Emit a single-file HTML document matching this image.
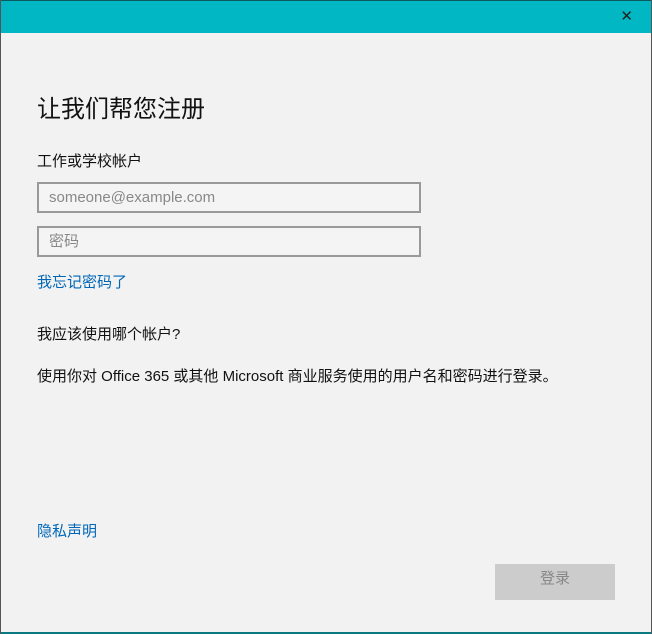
<html><head><style>
body{margin:0;width:652px;height:634px;background:#f2f2f2;font-family:"Liberation Sans","Noto Sans CJK SC",sans-serif;position:relative;overflow:hidden}
.t{position:absolute;left:0;top:0;width:652px;height:32px;background:#00b7c3;border-top:1px solid #0a5a60}
.x{position:absolute;right:19px;top:6px;font-size:15px;color:#222}
.a{position:absolute;white-space:nowrap}
.in{position:absolute;left:37px;height:27px;border:2px solid #999;background:#f4f4f4;color:#888;font-size:15px;line-height:27px;padding-left:10px;width:370px}
.l{color:#0067b8;font-size:15px}
</style></head><body style="background:#f2f2f2">
<div class="t"><span class="x">✕</span></div>
<div class="a" style="left:37px;top:89px;font-size:24px;color:#111">让我们帮您注册</div>
<div class="a" style="left:37px;top:150px;font-size:15px;color:#111">工作或学校帐户</div>
<div class="in" style="top:182px">someone@example.com</div>
<div class="in" style="top:226px">密码</div>
<div class="a l" style="left:37px;top:271px">我忘记密码了</div>
<div class="a" style="left:37px;top:323px;font-size:15px;color:#111">我应该使用哪个帐户?</div>
<div class="a" style="left:37px;top:365px;font-size:15px;color:#111">使用你对 Office 365 或其他 Microsoft 商业服务使用的用户名和密码进行登录。</div>
<div class="a l" style="left:37px;top:520px">隐私声明</div>
<div class="a" style="left:495px;top:564px;width:120px;height:36px;background:#ccc;color:#888;font-size:15px;text-align:center;line-height:30px">登录</div>
<div class="a" style="left:0;top:632px;width:652px;height:2px;background:#0a7a80"></div>
<div class="a" style="left:0;top:0;width:1px;height:634px;background:#555"></div>
<div class="a" style="right:0;top:0;width:1px;height:634px;background:#555"></div>
</body></html>
